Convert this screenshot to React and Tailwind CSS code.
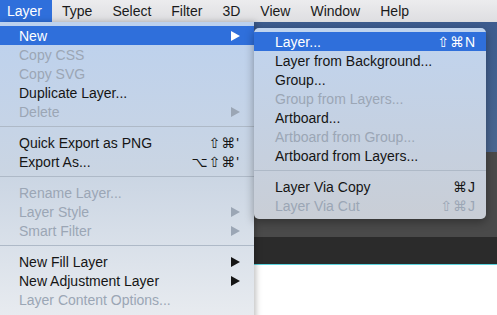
import React from 'react';

const FONT = { fontFamily: '"Liberation Sans", "DejaVu Sans", Arial, sans-serif' };

// Elementos de la barra de menús
const menuBar = ['Layer', 'Type', 'Select', 'Filter', '3D', 'View', 'Window', 'Help'];

// Menú principal "Layer"
const layerMenu = [
  { label: 'New', arrow: true, active: true },
  { label: 'Copy CSS', disabled: true },
  { label: 'Copy SVG', disabled: true },
  { label: 'Duplicate Layer...' },
  { label: 'Delete', disabled: true, arrow: true },
  { sep: true },
  { label: 'Quick Export as PNG', shortcut: '⇧⌘\'' },
  { label: 'Export As...', shortcut: '⌥⇧⌘\'' },
  { sep: true },
  { label: 'Rename Layer...', disabled: true },
  { label: 'Layer Style', disabled: true, arrow: true },
  { label: 'Smart Filter', disabled: true, arrow: true },
  { sep: true },
  { label: 'New Fill Layer', arrow: true },
  { label: 'New Adjustment Layer', arrow: true },
  { label: 'Layer Content Options...', disabled: true },
];

// Submenú "New"
const newMenu = [
  { label: 'Layer...', shortcut: '⇧⌘N', active: true },
  { label: 'Layer from Background...' },
  { label: 'Group...' },
  { label: 'Group from Layers...', disabled: true },
  { label: 'Artboard...' },
  { label: 'Artboard from Group...', disabled: true },
  { label: 'Artboard from Layers...' },
  { sep: true },
  { label: 'Layer Via Copy', shortcut: '⌘J' },
  { label: 'Layer Via Cut', shortcut: '⇧⌘J', disabled: true },
];

function Arrow({ color }) {
  return (
    <svg width="9" height="10" viewBox="0 0 9 10">
      <polygon points="0,0 9,5 0,10" fill={color} />
    </svg>
  );
}

function MenuRow({ item, padLeft, padRight }) {
  if (item.sep) {
    return (
      <div className="h-[12px] pt-[5px]">
        <div className="h-px bg-[#aeb9c7]" />
      </div>
    );
  }
  const color = item.active ? 'text-white' : item.disabled ? 'text-[#9ba6b5]' : 'text-[#151515]';
  const arrowColor = item.active ? '#ffffff' : item.disabled ? '#9ba6b5' : '#151515';
  return (
    <div
      className={`h-[19px] flex items-center justify-between text-[14px] leading-none ${color} ${padLeft} ${padRight} ${
        item.active ? 'bg-[#2f6fdb]' : ''
      }`}
    >
      <span>{item.label}</span>
      {item.shortcut && <span className="tracking-[1px]">{item.shortcut}</span>}
      {item.arrow && <Arrow color={arrowColor} />}
    </div>
  );
}

export default function App() {
  return (
    <div className="relative w-[497px] h-[315px] overflow-hidden flex flex-col bg-white" style={FONT}>
      {/* Barra de menús */}
      <div className="h-[22px] flex items-stretch bg-gradient-to-b from-[#ececee] to-[#dedee1] text-[14px] text-[#1a1a1a]">
        {menuBar.map((m, i) => (
          <div
            key={m}
            className={`flex items-center ${i === 0 ? 'pl-[7px] pr-[10px] bg-[#2f6fdb] text-white' : 'px-[10px]'}`}
          >
            {m}
          </div>
        ))}
      </div>

      {/* Fondo de la ventana */}
      <div className="h-[130px] bg-gradient-to-b from-[#3d5c8f] to-[#4a6690]" />
      <div className="h-[85px] bg-[#4a4a4a]" />
      <div className="h-[27px] bg-[#2b2b2b]" />
      <div className="h-px bg-[#5ad3de]" />
      <div className="flex-1 bg-white" />

      {/* Menú Layer */}
      <div className="absolute left-0 top-[22px] w-[254px] h-[300px] pt-[4px] bg-gradient-to-b from-[#bcd1ee] via-[#cad5e3] to-[#e9ecf0] shadow-[2px_0_6px_rgba(0,0,0,0.25)]">
        {layerMenu.map((item, i) => (
          <MenuRow key={i} item={item} padLeft="pl-[19px]" padRight="pr-[14px]" />
        ))}
      </div>

      {/* Submenú New */}
      <div className="absolute left-[254px] top-[28px] w-[232px] py-[4px] rounded-[5px] overflow-hidden bg-gradient-to-b from-[#c0d4ef] to-[#c9ced6] shadow-[0_3px_10px_rgba(0,0,0,0.35)]">
        {newMenu.map((item, i) => (
          <MenuRow key={i} item={item} padLeft="pl-[21px]" padRight="pr-[10px]" />
        ))}
      </div>
    </div>
  );
}
